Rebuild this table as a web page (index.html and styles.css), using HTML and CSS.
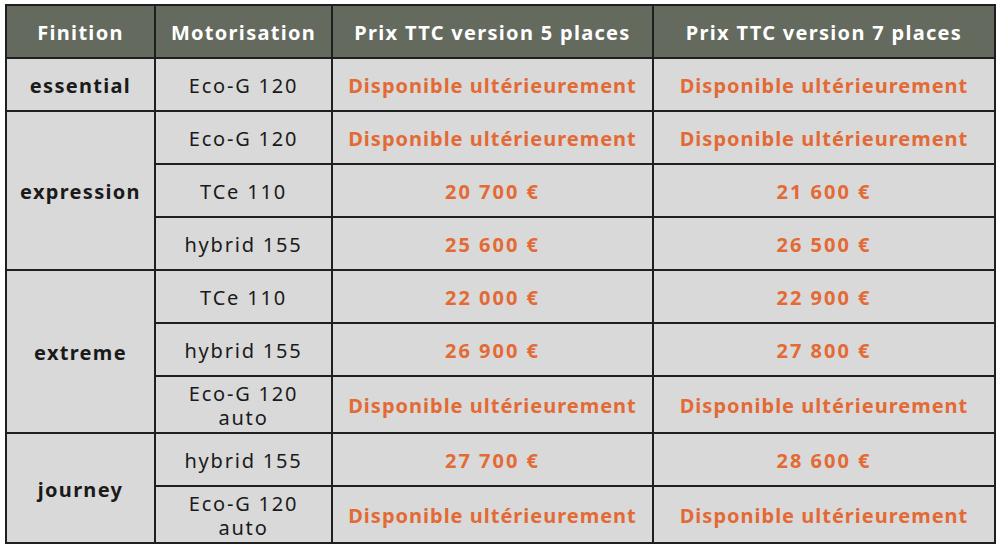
FILE: index.html
```html
<!DOCTYPE html>
<html lang="fr">
<head>
<meta charset="utf-8">
<title>Prix</title>
<link rel="stylesheet" href="styles.css">
</head>
<body>
<table class="prices">
  <colgroup>
    <col class="c1"><col class="c2"><col class="c3"><col class="c4">
  </colgroup>
  <thead>
    <tr class="h">
      <th>Finition</th><th>Motorisation</th><th>Prix TTC version 5 places</th><th>Prix TTC version 7 places</th>
    </tr>
  </thead>
  <tbody>
    <tr class="r">
      <td class="fin">essential</td><td class="mot">Eco-G 120</td><td class="p">Disponible ultérieurement</td><td class="p">Disponible ultérieurement</td>
    </tr>
    <tr class="r">
      <td class="fin" rowspan="3">expression</td><td class="mot">Eco-G 120</td><td class="p">Disponible ultérieurement</td><td class="p">Disponible ultérieurement</td>
    </tr>
    <tr class="r">
      <td class="mot">TCe 110</td><td class="p num">20 700 €</td><td class="p num">21 600 €</td>
    </tr>
    <tr class="r">
      <td class="mot">hybrid 155</td><td class="p num">25 600 €</td><td class="p num">26 500 €</td>
    </tr>
    <tr class="r">
      <td class="fin" rowspan="3">extreme</td><td class="mot">TCe 110</td><td class="p num">22 000 €</td><td class="p num">22 900 €</td>
    </tr>
    <tr class="r">
      <td class="mot">hybrid 155</td><td class="p num">26 900 €</td><td class="p num">27 800 €</td>
    </tr>
    <tr class="r tall">
      <td class="mot"><span class="ln">Eco-G 120</span><span class="ln">auto</span></td><td class="p">Disponible ultérieurement</td><td class="p">Disponible ultérieurement</td>
    </tr>
    <tr class="r">
      <td class="fin" rowspan="2">journey</td><td class="mot">hybrid 155</td><td class="p num">27 700 €</td><td class="p num">28 600 €</td>
    </tr>
    <tr class="r tall">
      <td class="mot"><span class="ln">Eco-G 120</span><span class="ln">auto</span></td><td class="p">Disponible ultérieurement</td><td class="p">Disponible ultérieurement</td>
    </tr>
  </tbody>
</table>
</body>
</html>
```
FILE: styles.css
```css
html, body {
  margin: 0;
  padding: 0;
  background: #ffffff;
}
body {
  padding: 4px 0 0 5px;
  font-family: "Noto Sans", "Liberation Sans", sans-serif;
}
.prices {
  border-collapse: collapse;
  table-layout: fixed;
  width: 989px;
  background: #d9d9d9;
}
.c1 { width: 149px; }
.c2 { width: 177px; }
.c3 { width: 321px; }
.c4 { width: 342px; }
.prices th, .prices td {
  border: 2px solid #1f1f1f;
  text-align: center;
  vertical-align: middle;
  padding: 2px 0 0 0;
}
.h { height: 53px; }
.h th {
  background: #646a5e;
  color: #ffffff;
  font-weight: 700;
  font-size: 20px;
  letter-spacing: 1.3px;
}
.r { height: 53px; }
.r.tall { height: 57px; }
.fin {
  font-weight: 700;
  font-size: 20px;
  color: #1a1a1a;
  letter-spacing: 1.3px;
}
.mot {
  font-size: 20px;
  color: #1a1a1a;
  line-height: 24px;
  letter-spacing: 1.8px;
}
.ln {
  display: block;
  line-height: 24px;
}
.p {
  color: #e36a34;
  font-weight: 700;
  font-size: 20px;
  letter-spacing: 1px;
}
.p.num {
  letter-spacing: 2px;
}
```
